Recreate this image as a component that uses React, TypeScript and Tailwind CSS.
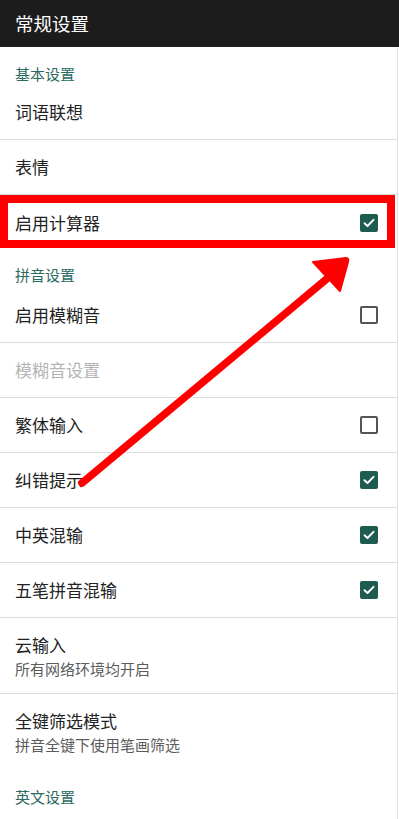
import React from 'react';

type Item = {
  title: string;
  subtitle?: string;
  check?: boolean;
  disabled?: boolean;
  divider?: boolean;
};

const font = { fontFamily: '"Noto Sans CJK SC", "Noto Sans", sans-serif' };

const Checkbox: React.FC<{ checked: boolean }> = ({ checked }) =>
  checked ? (
    <div className="w-[18px] h-[18px] rounded-[2px] bg-[#1e5b51] flex items-center justify-center">
      <svg width="12" height="10" viewBox="0 0 12 10" fill="none">
        <path d="M1.5 5.2 L4.5 8 L10.5 1.8" stroke="white" strokeWidth="1.9" strokeLinecap="round" strokeLinejoin="round" />
      </svg>
    </div>
  ) : (
    <div className="w-[18px] h-[18px] rounded-[2px] border-2 border-[#555555]" />
  );

const Row: React.FC<{ item: Item }> = ({ item }) => {
  const tall = !!item.subtitle;
  return (
    <div
      className={`flex items-center justify-between pl-[15px] pr-[19px] ${tall ? 'h-[76px]' : 'h-[55px]'} ${
        item.divider ? 'border-b border-[#dcdcdc]' : ''
      }`}
    >
      <div className="flex flex-col">
        <span className={`text-[17px] leading-[24px] ${item.disabled ? 'text-[#b4b4b4]' : 'text-[#222222]'}`}>
          {item.title}
        </span>
        {item.subtitle && (
          <span className="text-[15px] leading-[20px] text-[#5c5c5c] mt-[2px]">{item.subtitle}</span>
        )}
      </div>
      {item.check !== undefined && <Checkbox checked={item.check} />}
    </div>
  );
};

const Section: React.FC<{ title: string; className?: string }> = ({ title, className = '' }) => (
  <div className={`pl-[15px] flex items-end text-[15px] leading-[20px] text-[#2d6a62] ${className}`}>
    {title}
  </div>
);

const basic: Item[] = [
  { title: '词语联想', divider: true },
  { title: '表情', divider: true },
  { title: '启用计算器', check: true },
];

const pinyin: Item[] = [
  { title: '启用模糊音', check: false, divider: true },
  { title: '模糊音设置', disabled: true, divider: true },
  { title: '繁体输入', check: false, divider: true },
  { title: '纠错提示', check: true, divider: true },
  { title: '中英混输', check: true, divider: true },
  { title: '五笔拼音混输', check: true, divider: true },
  { title: '云输入', subtitle: '所有网络环境均开启', divider: true },
  { title: '全键筛选模式', subtitle: '拼音全键下使用笔画筛选' },
];

export default function App() {
  return (
    <div className="relative w-[399px] h-[819px] overflow-hidden bg-white" style={font}>
      <header className="h-[47px] bg-[#1c1c1c] flex items-center pl-[15px]">
        <h1 className="text-[18.5px] text-white">常规设置</h1>
      </header>

      <div className="border-r border-[#e2e2e2] mr-[1px]">
        <Section title="基本设置" className="h-[38px] pb-[1px]" />
        {basic.map((it) => (
          <Row key={it.title} item={it} />
        ))}
        <Section title="拼音设置" className="h-[38px] pb-[3px]" />
        {pinyin.map((it) => (
          <Row key={it.title} item={it} />
        ))}
        <Section title="英文设置" className="h-[38px] pb-[1px]" />
        <div className="h-[60px]" />
      </div>

      {/* annotation: highlight box */}
      <div className="absolute left-0 top-[195px] w-[395px] h-[53px] border-[8px] border-[#ff0000] pointer-events-none" />

      {/* annotation: arrow */}
      <svg className="absolute left-0 top-0 pointer-events-none" width="399" height="819" viewBox="0 0 399 819">
        <line x1="82" y1="483" x2="329" y2="277" stroke="#ff0000" strokeWidth="7.5" strokeLinecap="round" />
        <path d="M313 262 L346 258 Q349 258 348 262 L340 291 Z" fill="#ff0000" stroke="#ff0000" strokeWidth="2" strokeLinejoin="round" />
      </svg>
    </div>
  );
}
